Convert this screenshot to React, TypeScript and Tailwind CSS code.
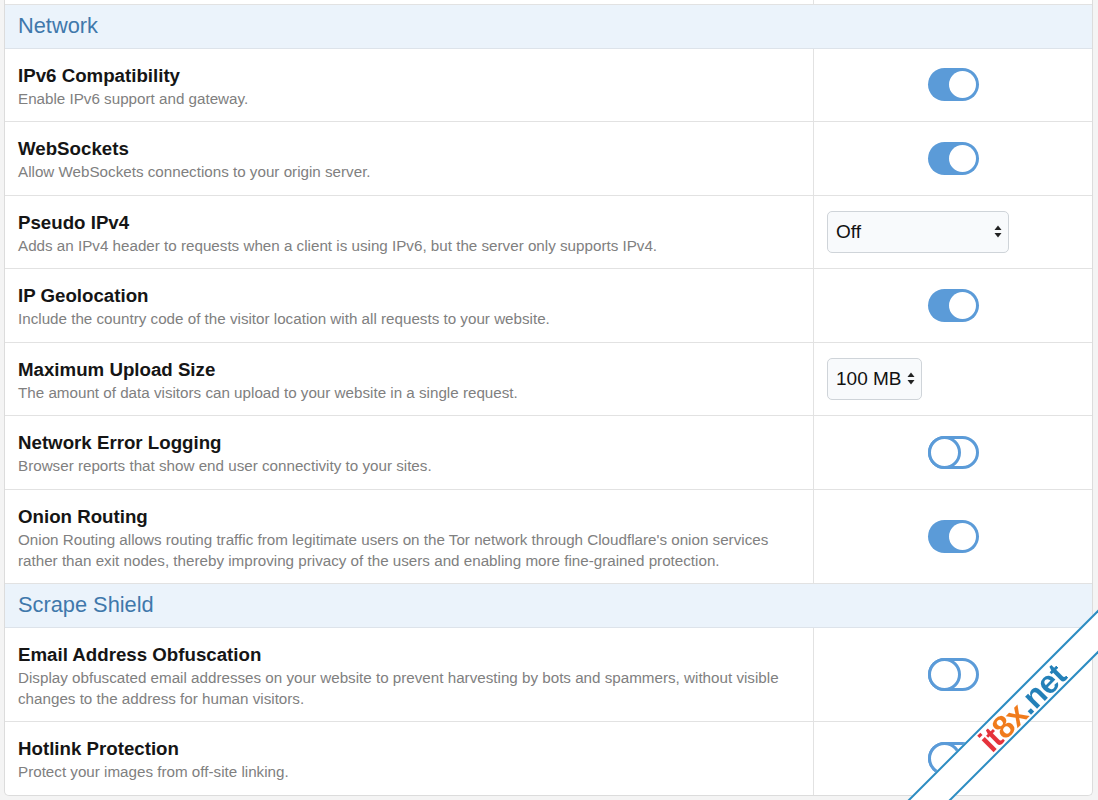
import React from 'react';

type Control =
  | { kind: 'toggle'; on: boolean }
  | { kind: 'select'; value: string; width: string };

interface Setting {
  title: string;
  desc: string[];
  control: Control;
}

interface Section {
  name: string;
  items: Setting[];
}

const sections: Section[] = [
  {
    name: 'Network',
    items: [
      { title: 'IPv6 Compatibility', desc: ['Enable IPv6 support and gateway.'], control: { kind: 'toggle', on: true } },
      { title: 'WebSockets', desc: ['Allow WebSockets connections to your origin server.'], control: { kind: 'toggle', on: true } },
      {
        title: 'Pseudo IPv4',
        desc: ['Adds an IPv4 header to requests when a client is using IPv6, but the server only supports IPv4.'],
        control: { kind: 'select', value: 'Off', width: 'w-[182px]' },
      },
      {
        title: 'IP Geolocation',
        desc: ['Include the country code of the visitor location with all requests to your website.'],
        control: { kind: 'toggle', on: true },
      },
      {
        title: 'Maximum Upload Size',
        desc: ['The amount of data visitors can upload to your website in a single request.'],
        control: { kind: 'select', value: '100 MB', width: 'w-[95px]' },
      },
      {
        title: 'Network Error Logging',
        desc: ['Browser reports that show end user connectivity to your sites.'],
        control: { kind: 'toggle', on: false },
      },
      {
        title: 'Onion Routing',
        desc: [
          "Onion Routing allows routing traffic from legitimate users on the Tor network through Cloudflare's onion services",
          'rather than exit nodes, thereby improving privacy of the users and enabling more fine-grained protection.',
        ],
        control: { kind: 'toggle', on: true },
      },
    ],
  },
  {
    name: 'Scrape Shield',
    items: [
      {
        title: 'Email Address Obfuscation',
        desc: [
          'Display obfuscated email addresses on your website to prevent harvesting by bots and spammers, without visible',
          'changes to the address for human visitors.',
        ],
        control: { kind: 'toggle', on: false },
      },
      { title: 'Hotlink Protection', desc: ['Protect your images from off-site linking.'], control: { kind: 'toggle', on: false } },
    ],
  },
];

const Toggle: React.FC<{ on: boolean }> = ({ on }) =>
  on ? (
    <div className="flex h-[33px] w-[51px] items-center justify-end rounded-full bg-[#5b9bd8] pr-[3px]">
      <div className="h-[27px] w-[27px] rounded-full bg-white" />
    </div>
  ) : (
    <div className="relative h-[33px] w-[51px] rounded-full border-[3px] border-[#5b9bd8] bg-white">
      <div className="absolute -left-[3px] -top-[3px] h-[33px] w-[33px] rounded-full border-[3px] border-[#5b9bd8] bg-white" />
    </div>
  );

const SelectBox: React.FC<{ value: string; width: string }> = ({ value, width }) => (
  <div
    className={`flex h-[42px] ${width} items-center justify-between rounded-[5px] border border-[#cfd4d9] bg-[#f8fafc] pl-[8px] pr-[6px] text-[19px] text-[#111]`}
  >
    <span>{value}</span>
    <svg width="8" height="13" viewBox="0 0 8 13" className="text-[#222]">
      <path d="M4 0.5 L7.5 5 H0.5 Z" fill="currentColor" />
      <path d="M4 12.5 L7.5 8 H0.5 Z" fill="currentColor" />
    </svg>
  </div>
);

const Row: React.FC<{ item: Setting; last: boolean }> = ({ item, last }) => (
  <div className={`grid grid-cols-[809px_1fr] ${last ? '' : 'border-b border-[#e2e2e2]'}`}>
    <div className="border-r border-[#e2e2e2] px-[13px] pb-[12.5px] pt-[14px]">
      <div className="text-[18.7px] font-bold leading-[25px] text-[#151515]">{item.title}</div>
      {item.desc.map((line) => (
        <div key={line} className="whitespace-nowrap text-[15.2px] leading-[21px] text-[#808080]">
          {line}
        </div>
      ))}
    </div>
    {item.control.kind === 'toggle' ? (
      <div className="flex items-center justify-center">
        <Toggle on={item.control.on} />
      </div>
    ) : (
      <div className="flex items-center pl-[13px]">
        <SelectBox value={item.control.value} width={item.control.width} />
      </div>
    )}
  </div>
);

export default function App() {
  return (
    <div className="relative h-[800px] w-[1098px] overflow-hidden bg-[#f4f4f4] font-['Liberation_Sans',Arial,sans-serif]">
      <div className="ml-[4px] w-[1089px] rounded-b-[5px] border-x border-b border-[#dcdcdc] bg-white">
        {/* tail of the previous table row */}
        <div className="grid h-[5px] grid-cols-[809px_1fr] border-b border-[#e2e2e2]">
          <div className="border-r border-[#e2e2e2]" />
          <div />
        </div>

        {sections.map((section, si) => (
          <div key={section.name}>
            <div className="border-b border-[#dde3ea] bg-[#ebf3fb] px-[13px] py-[7.25px] text-[21.8px] leading-[28px] text-[#3f78ab]">
              {section.name}
            </div>
            {section.items.map((item, i) => (
              <Row
                key={item.title}
                item={item}
                last={si === sections.length - 1 && i === section.items.length - 1}
              />
            ))}
          </div>
        ))}
      </div>

      {/* corner ribbon */}
      <div className="pointer-events-none absolute left-[797px] top-[692px] flex h-[31px] w-[450px] -rotate-45 items-center justify-center border-y-2 border-[#2c8cc2] bg-white">
        <span className="bg-[linear-gradient(90deg,#e5323b_0%,#e5323b_17.5%,#f07b1c_17.5%,#f07b1c_49%,#2380b8_49%,#2380b8_100%)] bg-clip-text text-[32px] font-bold leading-none tracking-[-0.5px] text-transparent">
          it8x.net
        </span>
      </div>
    </div>
  );
}
